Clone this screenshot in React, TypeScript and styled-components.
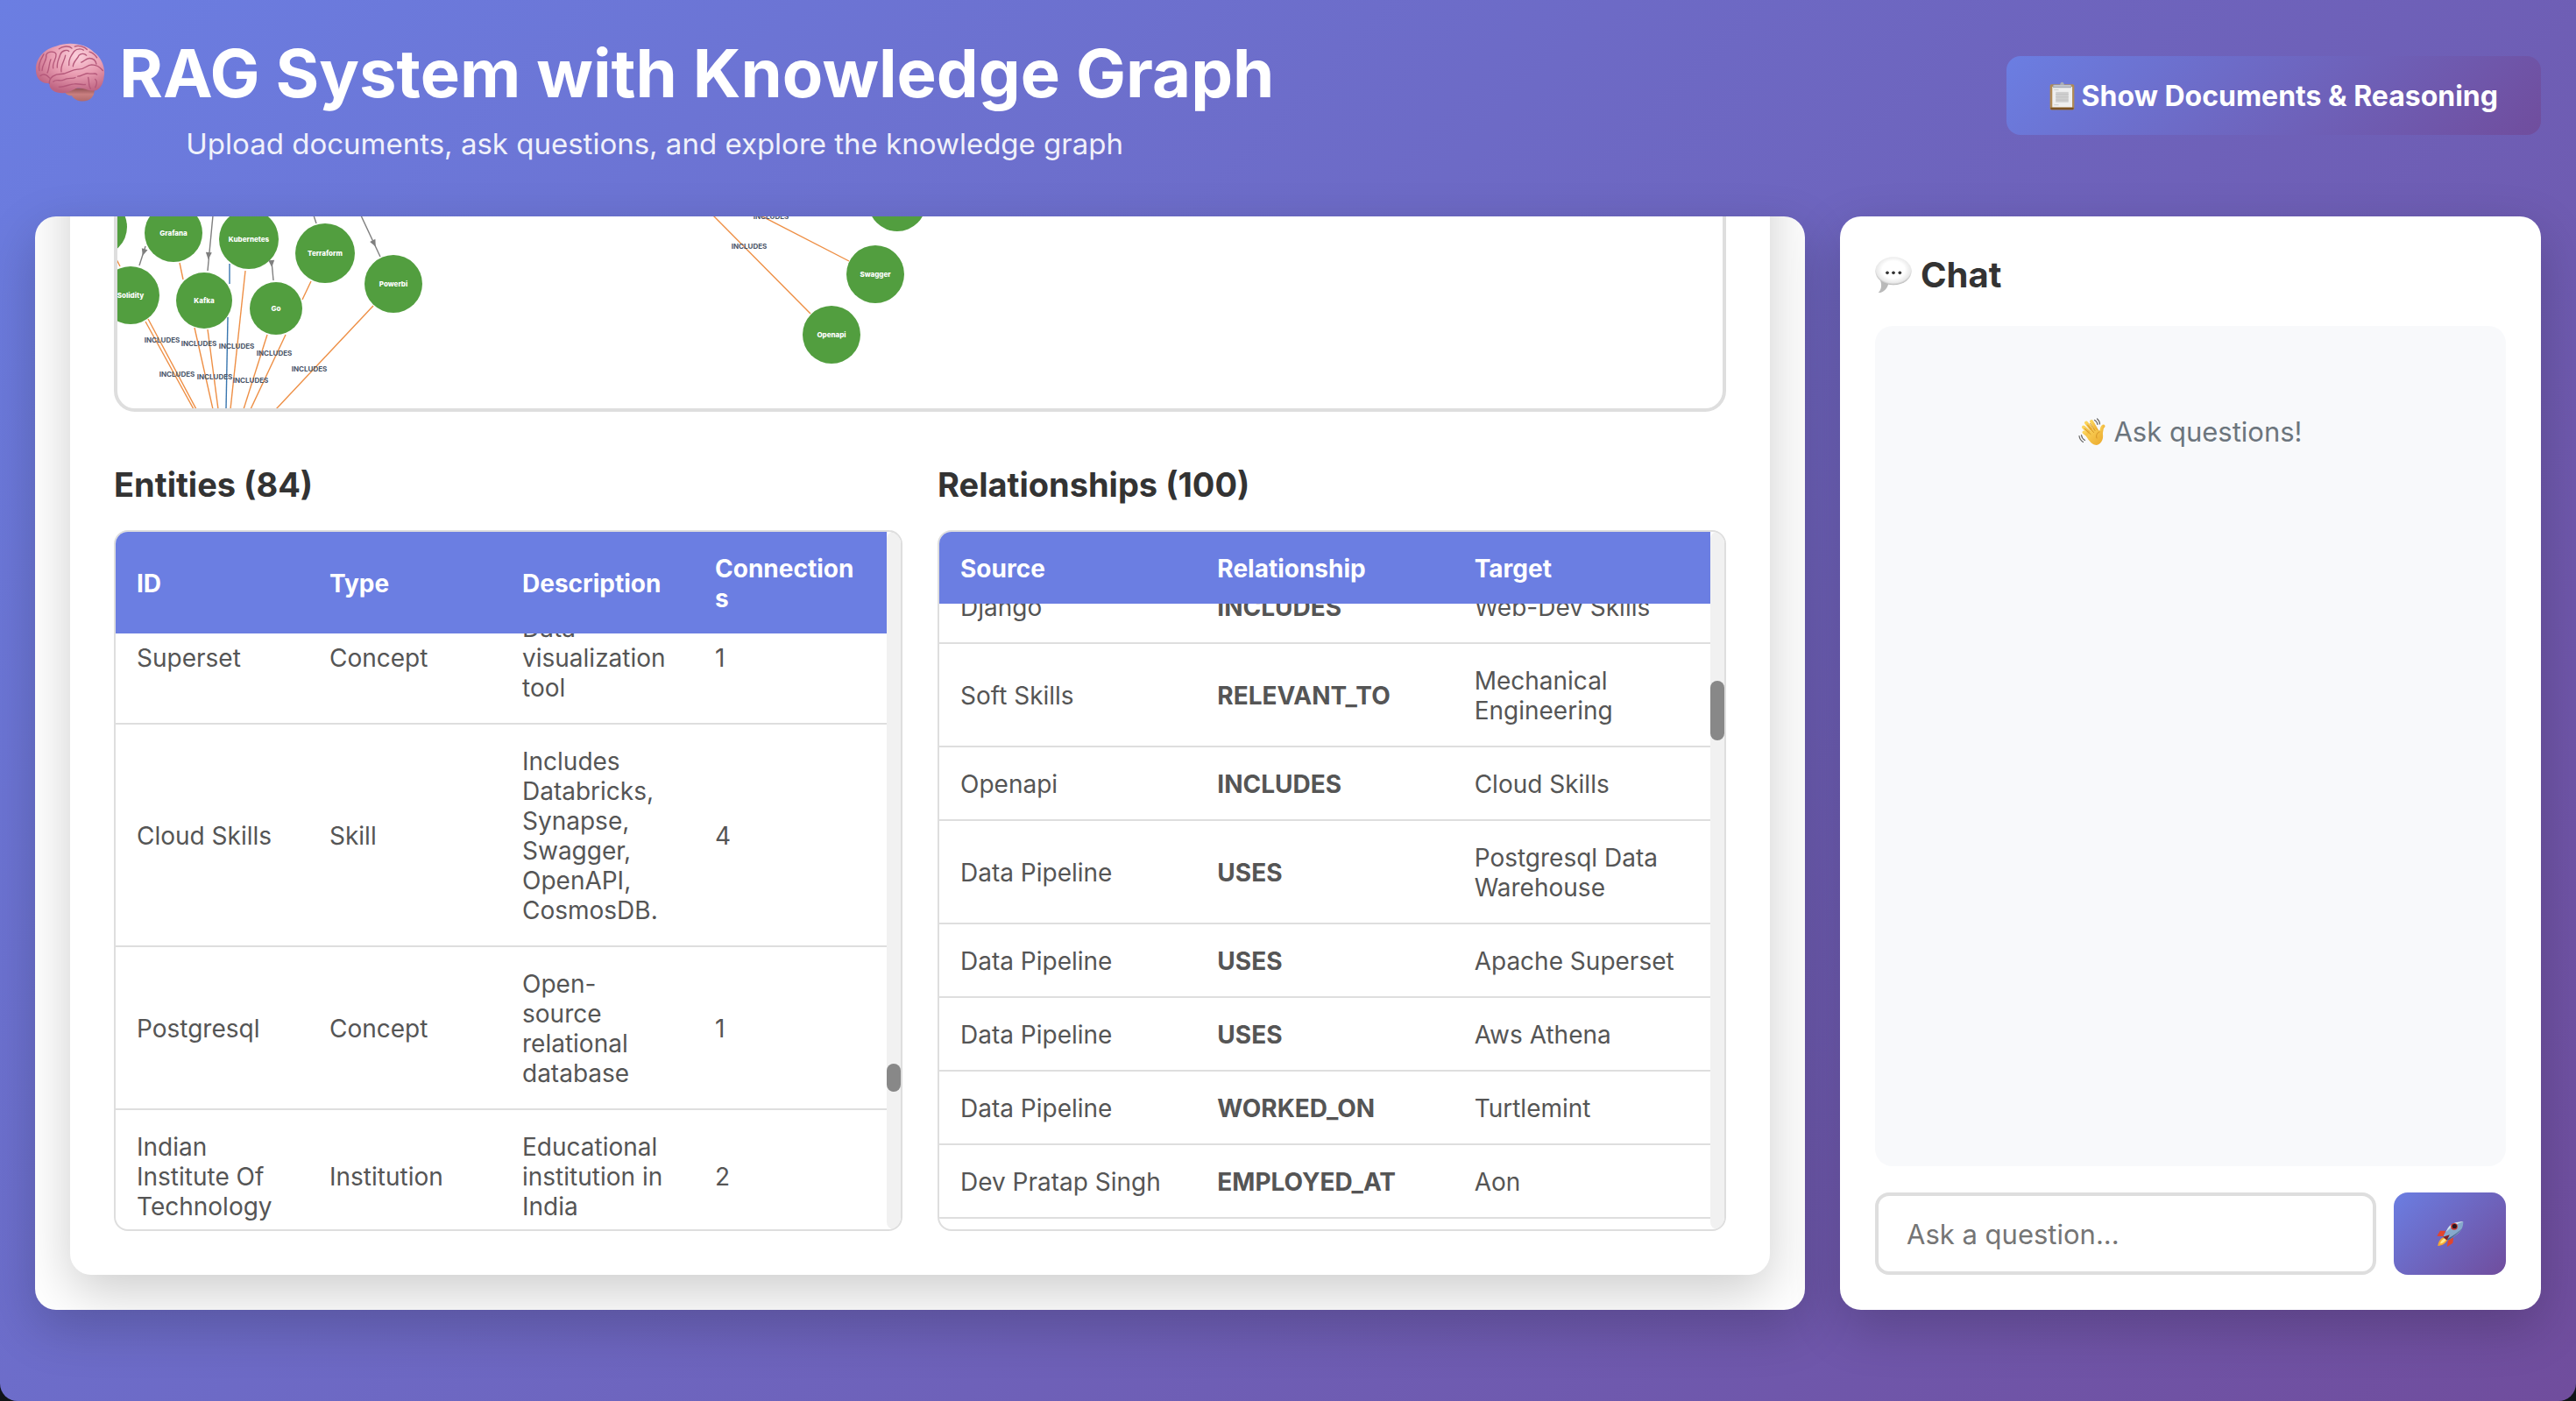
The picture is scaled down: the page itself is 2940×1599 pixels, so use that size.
import React, { useLayoutEffect, useRef } from "react";
import styled, { createGlobalStyle } from "styled-components";

const color = {
  indigo: "#6b7ee2",
  purple: "#704d9d",
  heading: "#333333",
  text: "#555555",
  muted: "#6c757d",
  line: "#dedede",
  node: "#529e3f",
  includes: "#ee8f45",
  related: "#3976af",
  neutral: "#7f7f7f",
  edgeLabel: "#4a5568",
};
const brandGradient = `linear-gradient(135deg, ${color.indigo} 0%, ${color.purple} 100%)`;
const cardShadow = "0 20px 60px rgba(0, 0, 0, 0.2)";

const GlobalStyle = createGlobalStyle`
  * { box-sizing: border-box; margin: 0; padding: 0; }
  body {
    background: #101418;
    font-family: Inter, Roboto, "Liberation Sans", sans-serif;
    color: ${color.heading};
  }
`;

const Page = styled.div`
  display: flex;
  flex-direction: column;
  height: 100vh;
  padding: 35px 40px 104px;
  border-radius: 0 0 20px 20px;
  background: ${brandGradient};
`;

const Header = styled.header`
  display: flex;
  align-items: center;
  justify-content: space-between;
  padding-bottom: 64px;
`;

const Brand = styled.div`
  color: #ffffff;
  text-align: center;
`;

const Title = styled.h1`
  display: flex;
  align-items: center;
  gap: 16px;
  font-size: 76px;
  line-height: 96px;
  font-weight: 700;
`;

const Subtitle = styled.p`
  margin-top: 14px;
  font-size: 33px;
  line-height: 38px;
  opacity: 0.9;
`;

const GradientButton = styled.button`
  display: flex;
  align-items: center;
  justify-content: center;
  gap: 8px;
  border: 0;
  border-radius: 16px;
  background: ${brandGradient};
  color: #ffffff;
  font-family: inherit;
  font-size: 32px;
  font-weight: 700;
  cursor: pointer;
`;

const ToggleButton = styled(GradientButton)`
  height: 90px;
  padding: 0 49px;
`;

const SendButton = styled(GradientButton)`
  width: 128px;
`;

const Main = styled.main`
  display: grid;
  grid-template-columns: minmax(0, 1fr) 800px;
  grid-template-rows: minmax(0, 1fr);
  gap: 40px;
  flex: 1;
  min-height: 0;
`;

const Panel = styled.section`
  display: flex;
  flex-direction: column;
  min-height: 0;
  padding: 40px;
  overflow: hidden;
  border-radius: 24px;
  background: #ffffff;
  box-shadow: ${cardShadow};
`;

const GraphPanel = styled(Panel)`
  justify-content: flex-end;
`;

const GraphCard = styled.div`
  flex-shrink: 0;
  padding: 50px;
  border-radius: 24px;
  background: #ffffff;
  box-shadow: ${cardShadow};
`;

const GraphFrame = styled.div`
  height: 400px;
  overflow: hidden;
  border: 4px solid ${color.line};
  border-radius: 24px;
`;

const GraphSvg = styled.svg`
  display: block;
  width: 100%;
  height: 100%;
  font-size: 8px;
`;

const Tables = styled.div`
  display: grid;
  grid-template-columns: repeat(2, minmax(0, 1fr));
  gap: 40px;
  margin-top: 61px;
`;

const TableHeading = styled.h3`
  margin-bottom: 29px;
  font-size: 38px;
  line-height: 45px;
  font-weight: 700;
`;

const TableFrame = styled.div`
  display: flex;
  height: 800px;
  overflow: hidden;
  border: 2px solid ${color.line};
  border-radius: 16px;
`;

const Viewport = styled.div`
  flex: 1;
  min-width: 0;
  overflow: hidden;
`;

const Track = styled.div`
  position: relative;
  width: 16px;
  border-radius: 8px;
  background: #f1f1f1;
`;

const Thumb = styled.div`
  position: absolute;
  left: 0;
  right: 0;
  border-radius: 8px;
  background: #888888;
`;

const Table = styled.table`
  width: 100%;
  margin-bottom: 24px;
  table-layout: fixed;
  border-collapse: separate;
  border-spacing: 0;
  font-size: 28px;
  line-height: 34px;
`;

const HeadCell = styled.th`
  position: sticky;
  top: 0;
  padding: 25px 24px 23px;
  background: ${color.indigo};
  color: #ffffff;
  font-weight: 700;
  text-align: left;
  overflow-wrap: break-word;
`;

const Cell = styled.td<{ $strong?: boolean }>`
  padding: 25px 24px 23px;
  border-bottom: 2px solid ${color.line};
  color: ${color.text};
  font-weight: ${(p) => (p.$strong ? 700 : 400)};
  vertical-align: middle;
  overflow-wrap: break-word;
`;

const ChatTitle = styled.h2`
  display: flex;
  align-items: center;
  gap: 10px;
  margin-bottom: 31px;
  font-size: 40px;
  line-height: 54px;
  font-weight: 700;
`;

const Messages = styled.div`
  flex: 1;
  min-height: 0;
  padding: 102px 40px 40px;
  border-radius: 20px;
  background: #f8f9fb;
`;

const EmptyState = styled.p`
  display: flex;
  align-items: center;
  justify-content: center;
  gap: 8px;
  color: ${color.muted};
  font-size: 31px;
  line-height: 38px;
`;

const Composer = styled.form`
  display: flex;
  gap: 20px;
  height: 94px;
  margin-top: 30px;
`;

const QuestionInput = styled.input`
  flex: 1;
  min-width: 0;
  padding: 0 32px;
  border: 4px solid ${color.line};
  border-radius: 16px;
  background: #ffffff;
  color: ${color.heading};
  font-family: inherit;
  font-size: 31px;
  &::placeholder { color: #757575; opacity: 1; }
`;

const BrainIcon = () => (
  <svg width="80" height="72" viewBox="30 50 240 215" aria-hidden="true">
    <defs>
      <radialGradient id="brain" cx="0.6" cy="0.25" r="0.75">
        <stop offset="0" stopColor="#fbd0dc" />
        <stop offset="0.5" stopColor="#e99db2" />
        <stop offset="1" stopColor="#bd6280" />
      </radialGradient>
      <linearGradient id="stem" x1="0" y1="0" x2="0" y2="1">
        <stop offset="0" stopColor="#8b4a4e" />
        <stop offset="0.5" stopColor="#c97f80" />
        <stop offset="1" stopColor="#b0696c" />
      </linearGradient>
    </defs>
    <path d="M126 212C132 232 145 236 156 236C168 258 208 262 224 243C234 232 234 222 232 208Z" fill="url(#stem)" />
    <path d="M33 152C30 108 62 76 104 66C146 50 206 58 232 88C258 106 272 142 266 170C264 196 252 216 234 219C214 222 198 208 176 210C160 214 148 226 126 227C100 228 78 216 79 194C52 194 35 180 33 152Z" fill="url(#brain)" />
    <g fill="none" stroke="#b4587a" strokeWidth="4" strokeLinecap="round" strokeLinejoin="round">
      <path d="M79 194C78 172 98 162 118 162C142 162 152 146 176 146C200 148 204 132 224 130C242 130 254 140 262 150" />
      <path d="M48 168C58 160 70 164 80 176M45 150C38 128 52 108 60 94M54 150C56 122 72 116 68 96C76 82 98 84 102 94C104 110 88 124 92 142" />
      <path d="M72 158C80 142 76 130 84 112M106 140C104 122 112 110 116 96C122 80 140 78 146 84" />
      <path d="M120 154C116 132 132 116 134 98M146 132C144 112 154 98 164 84C176 72 192 76 196 80" />
      <path d="M160 136C160 120 176 110 180 98C188 90 200 92 206 98M188 122C196 120 204 108 216 108C230 108 238 118 240 128" />
      <path d="M92 188C104 178 116 188 128 182C144 172 158 180 168 174M112 206C132 208 146 196 164 196C182 194 190 200 202 198" />
      <path d="M176 170C190 170 200 158 212 160C226 164 236 156 242 164M212 174C216 188 212 202 220 212M236 180C244 186 240 200 236 208" />
      <path d="M112 76C124 66 148 64 156 74M166 68C178 62 200 68 208 78M216 86C228 88 236 98 242 106" />
    </g>
  </svg>
);

const ClipboardIcon = () => (
  <svg width="29" height="33" viewBox="58 34 88 100" aria-hidden="true">
    <rect x="60" y="44" width="84" height="88" rx="5" fill="#b08a54" />
    <path d="M62 124h80v4q0 4-4 4H66q-4 0-4-4z" fill="#7c5426" />
    <rect x="68" y="52" width="69" height="71" fill="#efefef" />
    <rect x="80" y="70" width="44" height="36" fill="#cfcfcf" />
    <path d="M74 63h16M74 115h16M80 78h44M80 88h44M80 98h44" stroke="#bdbdbd" strokeWidth="2" />
    <path d="M70 56v-7q0-4 5-4h20q1-9 7-9t7 9h20q5 0 5 4v7z" fill="#a9adb6" />
    <path d="M74 49h58" stroke="#d8dbe2" strokeWidth="3" />
  </svg>
);

const BubbleIcon = () => (
  <svg width="42" height="42" viewBox="30 36 126 126" aria-hidden="true">
    <defs>
      <radialGradient id="bubble" cx="0.5" cy="0.45" r="0.56">
        <stop offset="0.55" stopColor="#ffffff" />
        <stop offset="0.85" stopColor="#e9e9e9" />
        <stop offset="1" stopColor="#a9a9a9" />
      </radialGradient>
    </defs>
    <path d="M48 116C54 134 52 148 41 159C58 160 72 146 76 128Z" fill="#b9b9b9" />
    <ellipse cx="93" cy="85" rx="62" ry="48" fill="url(#bubble)" />
    <g fill="#333333">
      <circle cx="72" cy="91" r="5.5" />
      <circle cx="93" cy="91" r="5.5" />
      <circle cx="115" cy="91" r="5.5" />
    </g>
  </svg>
);

const WaveIcon = () => (
  <svg width="32" height="32" viewBox="0 0 32 32" aria-hidden="true">
    <defs>
      <linearGradient id="hand" x1="0" y1="0" x2="1" y2="1">
        <stop offset="0" stopColor="#fbd45c" />
        <stop offset="1" stopColor="#eba92c" />
      </linearGradient>
    </defs>
    <g stroke="url(#hand)" strokeLinecap="round" fill="none">
      <path d="M6.500 16.500L15 23" strokeWidth="4" />
      <path d="M6 10.500L16 20" strokeWidth="4" />
      <path d="M9 5.500L18 17" strokeWidth="4" />
      <path d="M15 4L22 16" strokeWidth="4" />
      <path d="M28.500 9.500C25.500 11 27 17 25 20" strokeWidth="4" />
    </g>
    <path d="M10 20L16 12L22 14L27 15C30 22 27 30 21 31C16 31 12 26 9 21Z" fill="url(#hand)" />
    <path d="M7.500 12.500L14 18.500M10.500 8L17.500 16.500M13.500 6.500L19 14.500M24 16C21 17 20 20 21 23" fill="none" stroke="#cf8d22" strokeWidth="0.9" strokeLinecap="round" />
    <path d="M18.500 2.500Q21.500 4 22 7.500M21.500 1Q24.500 3.500 24.500 7M3.500 19.500Q4 23.500 7.500 25.500M1 20.500Q1.500 25 5.500 27.500" fill="none" stroke="#666666" strokeWidth="1.200" strokeLinecap="round" />
  </svg>
);

const RocketIcon = () => (
  <svg width="31" height="31" viewBox="62 36 96 92" aria-hidden="true">
    <path d="M94 70L74 70L63 89L86 90Z" fill="#e2452c" />
    <path d="M121 94L119 114L99 127L102 102Z" fill="#e2452c" />
    <path d="M90 92C78 94 68 106 66 124C82 122 96 114 100 101Z" fill="#f6a832" />
    <path d="M90 97C82 100 76 108 74 116C84 114 92 108 96 101Z" fill="#ffe88a" />
    <path d="M156 38C134 38 114 44 102 60L86 88Q90 100 104 104L130 86C148 74 156 58 156 38Z" fill="#86a9cc" />
    <path d="M156 38C134 38 114 44 102 60L94 75C112 58 132 46 156 38Z" fill="#d3e0ea" />
    <path d="M152 62C140 78 120 92 104 104L96 100C120 90 140 74 152 62Z" fill="#47648c" />
    <path d="M84 92L108 84L98 104Z" fill="#7d2027" />
    <circle cx="124" cy="55" r="12" fill="#c9342e" />
    <circle cx="125" cy="54" r="8" fill="#25171f" />
  </svg>
);

type Edge = [number, number, number, number];

const includesEdges: Edge[] = [
  [205, 300, 209, 319], [166, 367, 221, 467], [169, 364, 224, 467], [222, 374, 243, 467],
  [237, 376, 249, 467], [280, 309, 263, 467], [305, 382, 278, 467], [326, 382, 286, 467],
  [355, 321, 345, 342], [426, 349, 315, 467], [133, 296, 137, 304], [814, 246, 925, 358],
  [868, 246, 969, 298],
];
const relatedEdges: Edge[] = [[262, 301, 262, 324], [260, 362, 258, 467]];
const neutralEdges: Edge[] = [
  [166, 281, 159, 303], [243, 246, 237, 309], [310, 298, 312, 320],
  [358, 246, 361, 255], [412, 246, 434, 293],
];
const arrows = [
  { x: 164, y: 288, angle: 17 }, { x: 238, y: 292, angle: 5 },
  { x: 310, y: 301, angle: -4 }, { x: 427, y: 278, angle: -26 },
];
const edgeLabels = [
  [185, 388], [227, 392], [270, 395], [313, 403], [353, 421],
  [202, 427], [245, 430], [286, 434], [855, 281], [880, 247],
];
const nodes = [
  { x: 112, y: 259, r: 33, name: "" },
  { x: 198, y: 266, r: 33, name: "Grafana" },
  { x: 284, y: 273, r: 34, name: "Kubernetes" },
  { x: 371, y: 289, r: 34, name: "Terraform" },
  { x: 449, y: 324, r: 33, name: "Powerbi" },
  { x: 149, y: 337, r: 33, name: "Solidity" },
  { x: 233, y: 343, r: 32, name: "Kafka" },
  { x: 315, y: 352, r: 30, name: "Go" },
  { x: 1024, y: 231, r: 33, name: "" },
  { x: 999, y: 313, r: 33, name: "Swagger" },
  { x: 949, y: 382, r: 33, name: "Openapi" },
];

const Edges = ({ items, stroke }: { items: Edge[]; stroke: string }) => (
  <g stroke={stroke} strokeWidth="1.4">
    {items.map(([x1, y1, x2, y2], i) => (
      <line key={i} x1={x1} y1={y1} x2={x2} y2={y2} />
    ))}
  </g>
);

const KnowledgeGraph = () => (
  <GraphSvg viewBox="134 74 1832 392" preserveAspectRatio="xMinYMax slice" role="img" aria-label="Knowledge graph">
    <Edges items={includesEdges} stroke={color.includes} />
    <Edges items={relatedEdges} stroke={color.related} />
    <Edges items={neutralEdges} stroke={color.neutral} />
    {nodes.map((n, i) => (
      <circle key={i} cx={n.x} cy={n.y} r={n.r} fill={color.node} />
    ))}
    {arrows.map((a, i) => (
      <path key={i} d="M-3.500 -4L3.500 -4L0 4Z" fill={color.neutral} transform={`translate(${a.x} ${a.y}) rotate(${a.angle})`} />
    ))}
    <g fill="#ffffff" fontWeight="800" textAnchor="middle">
      {nodes.filter((n) => n.name).map((n) => (
        <text key={n.name} x={n.x} y={n.y + 3}>{n.name}</text>
      ))}
    </g>
    <g fill={color.edgeLabel} fontWeight="700" textAnchor="middle">
      {edgeLabels.map(([x, y], i) => (
        <text key={i} x={x} y={y + 3}>INCLUDES</text>
      ))}
    </g>
  </GraphSvg>
);

interface DataTableProps {
  title: string;
  columns: string[];
  rows: string[][];
  strongColumn?: number;
  scrollTop: number;
  thumb: { top: string; height: number };
}

const DataTable = ({ title, columns, rows, strongColumn, scrollTop, thumb }: DataTableProps) => {
  const viewport = useRef<HTMLDivElement>(null);
  useLayoutEffect(() => {
    if (viewport.current) viewport.current.scrollTop = scrollTop;
  }, [scrollTop]);
  return (
    <div>
      <TableHeading>{title}</TableHeading>
      <TableFrame>
        <Viewport ref={viewport}>
          <Table aria-label={title}>
            <thead>
              <tr>{columns.map((c) => <HeadCell key={c} scope="col">{c}</HeadCell>)}</tr>
            </thead>
            <tbody>
              {rows.map((row, r) => (
                <tr key={r}>
                  {row.map((value, c) => <Cell key={c} $strong={c === strongColumn}>{value}</Cell>)}
                </tr>
              ))}
            </tbody>
          </Table>
        </Viewport>
        <Track><Thumb style={thumb} /></Track>
      </TableFrame>
    </div>
  );
};

const entities = [
  ["Superset", "Concept", "Data visualization tool", "1"],
  ["Cloud Skills", "Skill", "Includes Databricks, Synapse, Swagger, OpenAPI, CosmosDB.", "4"],
  ["Postgresql", "Concept", "Open-source relational database", "1"],
  ["Indian Institute Of Technology", "Institution", "Educational institution in India", "2"],
];

const relationships = [
  ["Django", "INCLUDES", "Web-Dev Skills"],
  ["Soft Skills", "RELEVANT_TO", "Mechanical Engineering"],
  ["Openapi", "INCLUDES", "Cloud Skills"],
  ["Data Pipeline", "USES", "Postgresql Data Warehouse"],
  ["Data Pipeline", "USES", "Apache Superset"],
  ["Data Pipeline", "USES", "Aws Athena"],
  ["Data Pipeline", "WORKED_ON", "Turtlemint"],
  ["Dev Pratap Singh", "EMPLOYED_AT", "Aon"],
];

export default function App() {
  return (
    <>
      <GlobalStyle />
      <Page>
        <Header>
          <Brand>
            <Title><BrainIcon />RAG System with Knowledge Graph</Title>
            <Subtitle>Upload documents, ask questions, and explore the knowledge graph</Subtitle>
          </Brand>
          <ToggleButton type="button"><ClipboardIcon />Show Documents &amp; Reasoning</ToggleButton>
        </Header>
        <Main>
          <GraphPanel>
            <GraphCard>
              <GraphFrame><KnowledgeGraph /></GraphFrame>
              <Tables>
                <DataTable
                  title="Entities (84)"
                  columns={["ID", "Type", "Description", "Connections"]}
                  rows={entities}
                  scrollTop={48}
                  thumb={{ top: "76.3%", height: 32 }}
                />
                <DataTable
                  title="Relationships (100)"
                  columns={["Source", "Relationship", "Target"]}
                  rows={relationships}
                  strongColumn={1}
                  scrollTop={38}
                  thumb={{ top: "21.4%", height: 68 }}
                />
              </Tables>
            </GraphCard>
          </GraphPanel>
          <Panel>
            <ChatTitle><BubbleIcon />Chat</ChatTitle>
            <Messages>
              <EmptyState><WaveIcon />Ask questions!</EmptyState>
            </Messages>
            <Composer onSubmit={(e) => e.preventDefault()}>
              <QuestionInput type="text" aria-label="Ask a question" placeholder="Ask a question..." />
              <SendButton type="submit" aria-label="Send"><RocketIcon /></SendButton>
            </Composer>
          </Panel>
        </Main>
      </Page>
    </>
  );
}
